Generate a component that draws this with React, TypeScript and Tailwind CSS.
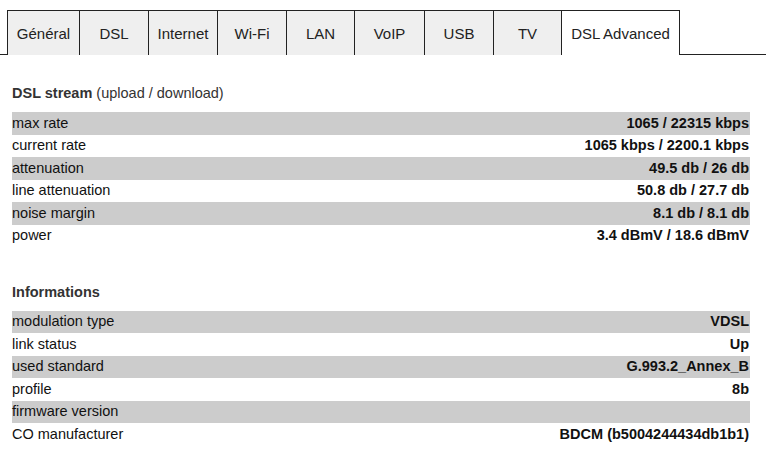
const tabs = [
  { label: "Général", w: "w-[72px]" },
  { label: "DSL", w: "w-[69px]" },
  { label: "Internet", w: "w-[69px]" },
  { label: "Wi-Fi", w: "w-[69px]" },
  { label: "LAN", w: "w-[68px]" },
  { label: "VoIP", w: "w-[70px]" },
  { label: "USB", w: "w-[69px]" },
  { label: "TV", w: "w-[68px]" },
];

const stream = [
  ["max rate", "1065 / 22315 kbps"],
  ["current rate", "1065 kbps / 2200.1 kbps"],
  ["attenuation", "49.5 db / 26 db"],
  ["line attenuation", "50.8 db / 27.7 db"],
  ["noise margin", "8.1 db / 8.1 db"],
  ["power", "3.4 dBmV / 18.6 dBmV"],
];

const infos = [
  ["modulation type", "VDSL"],
  ["link status", "Up"],
  ["used standard", "G.993.2_Annex_B"],
  ["profile", "8b"],
  ["firmware version", ""],
  ["CO manufacturer", "BDCM (b5004244434db1b1)"],
];

function Rows({ rows }: { rows: string[][] }) {
  return (
    <div>
      {rows.map(([label, value], i) => (
        <div
          key={label}
          className={`flex h-[22.5px] items-center justify-between pt-[1px] ${i % 2 === 0 ? "bg-[#cccccc]" : "bg-white"}`}
        >
          <span>{label}</span>
          <span className="font-bold pr-[1px]">{value}</span>
        </div>
      ))}
    </div>
  );
}

export default function App() {
  return (
    <div className="w-[766px] h-[469px] bg-white text-[#111] text-[14.5px] font-['Liberation_Sans',Arial,sans-serif] overflow-hidden">
      {/* Tabs */}
      <div className="flex items-end pt-[10px]">
        <div className="w-[7px] border-b border-[#222]" />
        {tabs.map((t) => (
          <div
            key={t.label}
            className={`${t.w} h-[45px] flex items-center justify-center pt-[2px] bg-[#efefef] border-l border-t border-[#222] text-[15px] text-[#222]`}
          >
            {t.label}
          </div>
        ))}
        <div className="w-[119px] h-[45px] flex items-center justify-center pt-[2px] bg-white border-l border-t border-r border-[#222] text-[15px] text-[#222]">
          DSL Advanced
        </div>
        <div className="flex-1 border-b border-[#222]" />
      </div>

      <div className="pl-[12px] pr-[16px]">
        <div className="mt-[28px] h-[22px] flex items-center text-[#333]">
          <span className="font-bold">DSL stream</span>
          <span className="ml-[4px]">(upload / download)</span>
        </div>
        <div className="mt-[7px]">
          <Rows rows={stream} />
        </div>

        <div className="mt-[35px] h-[22px] flex items-center text-[#333] font-bold">
          Informations
        </div>
        <div className="mt-[6.5px]">
          <Rows rows={infos} />
        </div>
      </div>
    </div>
  );
}
